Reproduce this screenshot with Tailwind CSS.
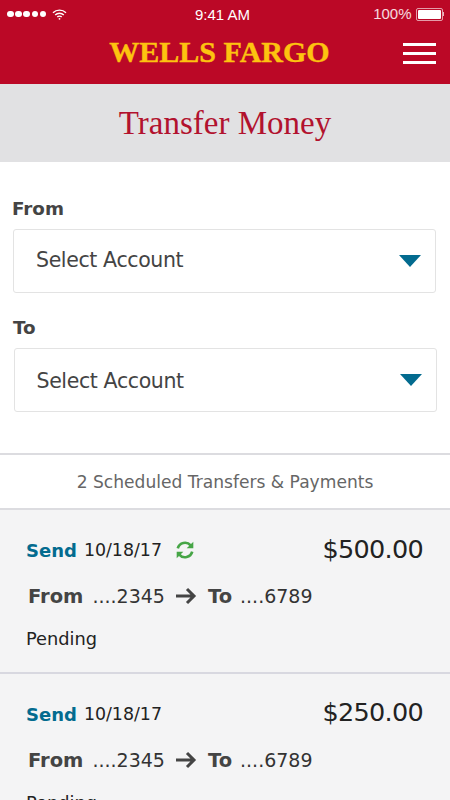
<!DOCTYPE html>
<html lang="en">
<head>
    <meta charset="utf-8" />
    <meta name="viewport" content="width=device-width, initial-scale=1.0" />
    <script src="https://cdn.jsdelivr.net/npm/@tailwindcss/browser@4"></script>
</head>
<body class="bg-white font-['DejaVu_Sans',sans-serif] w-[450px] h-[800px] overflow-hidden">
    <!-- red header -->
    <header class="bg-[#bb0826] h-[84px] text-white">
        <div class="h-[28px] flex items-center justify-between pl-[7px] pr-[6px] font-['Liberation_Sans',sans-serif] text-[15px] relative">
            <div class="flex items-center gap-[1.7px]">
                <span class="w-[6.5px] h-[6.5px] rounded-full bg-white"></span>
                <span class="w-[6.5px] h-[6.5px] rounded-full bg-white"></span>
                <span class="w-[6.5px] h-[6.5px] rounded-full bg-white"></span>
                <span class="w-[6.5px] h-[6.5px] rounded-full bg-white"></span>
                <span class="w-[6.5px] h-[6.5px] rounded-full bg-white"></span>
                <svg class="ml-[4px]" width="15" height="11" viewBox="0 0 15 11" fill="none" stroke="white" stroke-width="1.4">
                    <path d="M1 3.8a9.2 9.2 0 0 1 13 0" />
                    <path d="M3.2 6a6 6 0 0 1 8.6 0" />
                    <path d="M5.3 8.1a3 3 0 0 1 4.4 0" />
                    <circle cx="7.5" cy="9.8" r="0.9" fill="white" stroke="none" />
                </svg>
            </div>
            <span class="absolute left-[195px] top-[4px]">9:41 AM</span>
            <div class="flex items-center gap-[4px]">
                <span class="text-white/85 ml-[1px]">100%</span>
                <div class="flex items-center">
                    <div class="w-[27px] h-[13px] rounded-[2px] border border-white/60 p-[1px]"><div class="w-full h-full bg-white rounded-[1px]"></div></div>
                    <div class="w-[1.5px] h-[4px] bg-white/70"></div>
                </div>
            </div>
        </div>
        <div class="relative h-[56px] flex items-center justify-center">
            <span class="font-['Liberation_Serif',serif] font-bold text-[#fdc310] text-[29px] leading-none mr-[11px] mb-[7px] scale-x-[1.035] [-webkit-text-stroke:0.4px_#fdc310]">WELLS FARGO</span>
            <div class="absolute left-[403px] top-[15px] w-[33px] flex flex-col gap-[6px]">
                <span class="h-[3px] bg-white"></span>
                <span class="h-[3px] bg-white"></span>
                <span class="h-[3px] bg-white"></span>
            </div>
        </div>
    </header>

    <div class="bg-[#e1e1e3] h-[78px] flex items-center justify-center">
        <h1 class="font-['Liberation_Serif',serif] text-[#b2122e] text-[33px] leading-none">Transfer Money</h1>
    </div>

    <!-- form -->
    <section class="h-[293px] border-b-2 border-[#dcdce0]">
        <div class="pt-[36px] pl-[13px] pr-[14px]">
            <label class="block text-[#444] font-bold text-[18.3px] leading-[22px] -ml-[1px] mb-[9px]">From</label>
            <div class="h-[64px] border border-[#e3e3e3] rounded-[3px] flex items-center justify-between pl-[22px] pr-[14px]">
                <span class="text-[#444] text-[20.5px] tracking-[-0.38px] -mt-[2px]">Select Account</span>
                <span class="w-0 h-0 border-x-[11px] border-x-transparent border-t-[12px] border-t-[#036b8f]"></span>
            </div>
        </div>
        <div class="pt-[24px] pl-[14px] pr-[13px]">
            <label class="block text-[#444] font-bold text-[18.3px] leading-[22px] -ml-[1px] mb-[9px]">To</label>
            <div class="h-[64px] border border-[#e3e3e3] rounded-[3px] flex items-center justify-between pl-[21.5px] pr-[14px]">
                <span class="text-[#444] text-[20.5px] tracking-[-0.38px] mt-[2px]">Select Account</span>
                <span class="w-0 h-0 border-x-[11px] border-x-transparent border-t-[12px] border-t-[#036b8f]"></span>
            </div>
        </div>
    </section>

    <div class="h-[55px] flex items-center justify-center text-[#666] text-[17.1px] pt-[3px] border-b-2 border-[#dcdce0]">2 Scheduled Transfers &amp; Payments</div>

    <!-- transfers -->
    <article class="bg-[#f4f4f5] h-[164px] border-b-2 border-[#d8d8e0] pl-[26px] pr-[27px] pt-[24px]">
        <div class="flex items-center justify-between h-[32px]">
            <div class="flex items-center">
                <span class="text-[#036b8f] font-bold text-[18px]">Send</span>
                <span class="text-[#222] text-[17.4px] ml-[7px]">10/18/17</span>
                <svg class="ml-[13px]" width="20" height="20" viewBox="0 0 18 18" fill="none" stroke="#46a546" stroke-width="2.4">
                    <path d="M2.5 7.5a6.7 6.7 0 0 1 11.6-2.6" />
                    <path d="M15.5 10.5a6.7 6.7 0 0 1-11.6 2.6" />
                    <path d="M16.5 1.5v6h-6z" fill="#46a546" stroke="none" />
                    <path d="M1.5 16.5v-6h6z" fill="#46a546" stroke="none" />
                </svg>
            </div>
            <span class="text-[#222] text-[25.5px] tracking-[-0.7px] -mt-[1px]">$500.00</span>
        </div>
        <div class="flex items-center mt-[18px] ml-[2px] h-[24px]">
            <span class="text-[#444] font-bold text-[19.5px] mt-[2px]">From</span>
            <span class="text-[#333] text-[19px] ml-[9px]">....2345</span>
            <svg class="ml-[10px]" width="22" height="18" viewBox="0 0 22 18" fill="none" stroke="#444" stroke-width="3">
                <path d="M1 9h18M12 2l7 7-7 7" />
            </svg>
            <span class="text-[#444] font-bold text-[19.5px] ml-[11px] mt-[2px]">To</span>
            <span class="text-[#333] text-[19px] ml-[8px]">....6789</span>
        </div>
        <p class="text-[#222] text-[17.8px] mt-[19px] leading-[24px]">Pending</p>
    </article>
    <article class="bg-[#f4f4f5] h-[164px] pl-[26px] pr-[27px] pt-[24px]">
        <div class="flex items-center justify-between h-[32px]">
            <div class="flex items-center">
                <span class="text-[#036b8f] font-bold text-[18px]">Send</span>
                <span class="text-[#222] text-[17.4px] ml-[7px]">10/18/17</span>
            </div>
            <span class="text-[#222] text-[25.5px] tracking-[-0.7px] -mt-[3px]">$250.00</span>
        </div>
        <div class="flex items-center mt-[18px] ml-[2px] h-[24px]">
            <span class="text-[#444] font-bold text-[19.5px] mt-[2px]">From</span>
            <span class="text-[#333] text-[19px] ml-[9px]">....2345</span>
            <svg class="ml-[10px]" width="22" height="18" viewBox="0 0 22 18" fill="none" stroke="#444" stroke-width="3">
                <path d="M1 9h18M12 2l7 7-7 7" />
            </svg>
            <span class="text-[#444] font-bold text-[19.5px] ml-[11px] mt-[2px]">To</span>
            <span class="text-[#333] text-[19px] ml-[8px]">....6789</span>
        </div>
        <p class="text-[#222] text-[17.8px] mt-[19px] leading-[24px]">Pending</p>
    </article>
</body>
</html>
